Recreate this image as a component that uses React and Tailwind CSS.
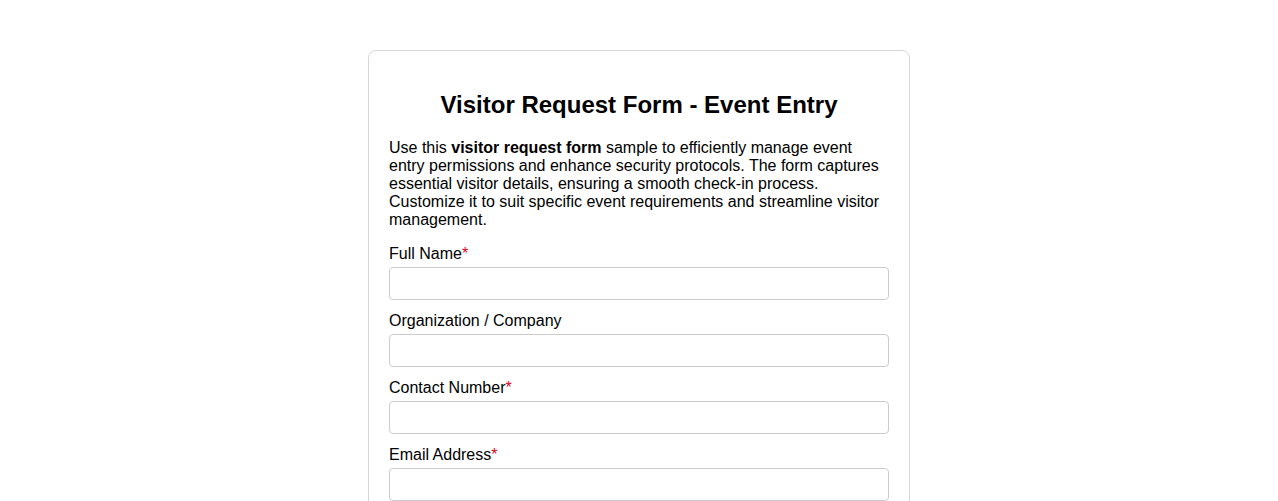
import React from 'react';

const fields = [
  { id: 'fullName', label: 'Full Name', required: true, type: 'text' },
  { id: 'organization', label: 'Organization / Company', required: false, type: 'text' },
  { id: 'contact', label: 'Contact Number', required: true, type: 'tel' },
  { id: 'email', label: 'Email Address', required: true, type: 'email' },
];

const App = () => {
  return (
    <div className="min-h-screen bg-white pt-[50px] text-black" style={{ fontFamily: '"Liberation Sans", Arial, sans-serif' }}>
      <div className="mx-auto w-[542px] rounded-lg border border-[#d6d6d6] bg-white px-5 pt-5 pb-5">
        <h2 className="mt-5 mb-[19px] text-center text-[24px] font-bold leading-[28px]">
          Visitor Request Form - Event Entry
        </h2>
        <p className="mb-[15px] pt-[1px] text-[16px] leading-[18px]">
          Use this <strong>visitor request form</strong> sample to efficiently manage event entry permissions and
          enhance security protocols. The form captures essential visitor details, ensuring a smooth check-in
          process. Customize it to suit specific event requirements and streamline visitor management.
        </p>
        <form>
          {fields.map(field => (
            <div key={field.id} className="mb-[11px]">
              <label htmlFor={field.id} className="mb-[4px] block pt-[1px] text-[16px] leading-[18px]">
                {field.label}
                {field.required && <span className="text-[#e0001b]">*</span>}
              </label>
              <input
                id={field.id}
                type={field.type}
                className="block h-[33px] w-full rounded border border-[#cccccc] bg-white px-2 text-[14px] outline-none"
              />
            </div>
          ))}
        </form>
      </div>
    </div>
  );
};

export default App;
